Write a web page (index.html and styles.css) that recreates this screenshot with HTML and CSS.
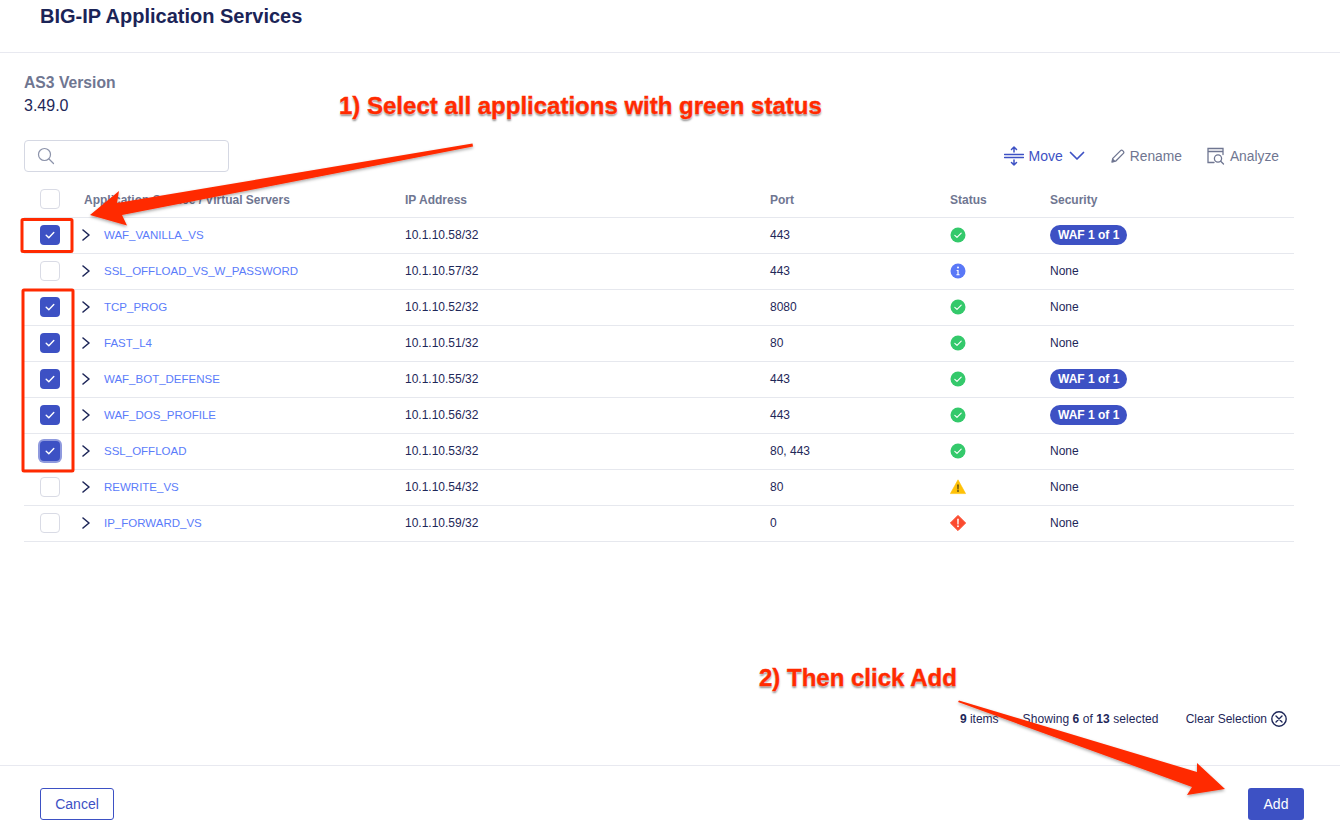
FILE: index.html
```html
<!DOCTYPE html>
<html lang="en">
<head>
<meta charset="utf-8">
<title>BIG-IP Application Services</title>
<link rel="stylesheet" href="styles.css">
</head>
<body>
<svg width="0" height="0" class="defs">
  <defs>
    <symbol id="tick" viewBox="0 0 20 20"><path d="M6.2 10.3l2.6 2.5 5-5.2" fill="none" stroke="#fff" stroke-width="1.4" stroke-linecap="round" stroke-linejoin="round"/></symbol>
    <symbol id="chev" viewBox="0 0 10 14"><path d="M2 2l6 5-6 5" fill="none" stroke="#1e2759" stroke-width="1.6" stroke-linecap="round" stroke-linejoin="round"/></symbol>
    <symbol id="ok" viewBox="0 0 16 16"><circle cx="8" cy="8" r="7.5" fill="#34c96b"/><path d="M4.8 8.3l2.2 2.1 4.2-4.2" fill="none" stroke="#fff" stroke-width="1.1" stroke-linecap="round" stroke-linejoin="round"/></symbol>
    <symbol id="info" viewBox="0 0 16 16"><circle cx="8" cy="8" r="7.5" fill="#5a78f7"/><circle cx="8" cy="4.6" r="1" fill="#fff"/><path d="M6.6 7h2v4.2h1v1H6.4v-1h1V8h-.8z" fill="#fff"/></symbol>
    <symbol id="warn" viewBox="0 0 16 16"><path d="M8 .8L15.6 14.6H.4z" fill="#ffc107" stroke="#ffc107" stroke-width=".6" stroke-linejoin="round"/><path d="M7.2 5.400h1.600l-.2 5H7.400z" fill="#5a4a10"/><circle cx="8" cy="12" r=".9" fill="#5a4a10"/></symbol>
    <symbol id="crit" viewBox="0 0 16 16"><path d="M8 .4L15.6 8 8 15.6.4 8z" fill="#fb4a2e" stroke="#fb4a2e" stroke-linejoin="round"/><path d="M7.2 3.800h1.600l-.2 5.600H7.400z" fill="#fff"/><circle cx="8" cy="11.2" r=".95" fill="#fff"/></symbol>
  </defs>
</svg>

<div class="page">
  <header class="head"><h1 class="title">BIG-IP Application Services</h1></header>

  <main class="content">
    <div class="version">
      <div class="version-label">AS3 Version</div>
      <div class="version-value">3.49.0</div>
    </div>

    <div class="toolbar">
      <div class="search">
        <svg class="search-icon" width="18" height="18" viewBox="0 0 18 18"><circle cx="7.5" cy="7.5" r="6" fill="none" stroke="#8c93aa" stroke-width="1.2"/><path d="M12 12l4.500 4.500" stroke="#8c93aa" stroke-width="1.2" stroke-linecap="round"/></svg>
      </div>
      <div class="actions">
        <span class="action primary">
          <svg width="20" height="20" viewBox="0 0 20 20" fill="none" stroke="#3d51c4" stroke-width="1.5" stroke-linecap="round" stroke-linejoin="round"><path d="M0.500 8.500h19M0.500 11.500h19M10 1v5M10 14v5M7.500 3.500L10 1l2.500 2.500M7.500 16.500L10 19l2.500-2.500"/></svg>
          <span>Move</span>
          <svg class="caret" width="16" height="10" viewBox="0 0 16 10"><path d="M1.500 1.500L8 8l6.500-6.500" fill="none" stroke="#3d51c4" stroke-width="1.7" stroke-linecap="round" stroke-linejoin="round"/></svg>
        </span>
        <span class="action muted pencil">
          <svg width="14" height="14" viewBox="0 0 14 14"><path d="M1 13l.8-3.600L9.600 1.600a1.400 1.400 0 0 1 2 0l.8.8a1.400 1.400 0 0 1 0 2L4.600 12.200z" fill="none" stroke="#6f7691" stroke-width="1.300" stroke-linejoin="round"/><path d="M1 13l.8-3.600 2.800 2.800z" fill="#6f7691"/></svg>
          <span>Rename</span>
        </span>
        <span class="action muted">
          <svg width="18" height="18" viewBox="0 0 18 18" fill="none" stroke="#6f7691" stroke-width="1.300" stroke-linecap="round"><path d="M7 15.500H1V1.500h15v6M1 4.500h15"/><circle cx="11" cy="11.500" r="3.600"/><path d="M13.700 14.200l2.800 2.800"/></svg>
          <span>Analyze</span>
        </span>
      </div>
    </div>

    <table class="apps">
      <colgroup><col class="c-check"><col class="c-name"><col class="c-ip"><col class="c-port"><col class="c-status"><col class="c-sec"></colgroup>
      <thead>
        <tr>
          <th><span class="box"></span></th>
          <th class="name-head">Application Service / Virtual Servers</th>
          <th>IP Address</th><th>Port</th><th>Status</th><th>Security</th>
        </tr>
      </thead>
      <tbody>
        <tr><td><span class="box on"><svg width="20" height="20"><use href="#tick"/></svg></span></td><td><svg class="chev" width="10" height="14"><use href="#chev"/></svg><a class="link">WAF_VANILLA_VS</a></td><td>10.1.10.58/32</td><td>443</td><td><svg class="st" width="16" height="16"><use href="#ok"/></svg></td><td><span class="pill">WAF 1 of 1</span></td></tr>
        <tr><td><span class="box"></span></td><td><svg class="chev" width="10" height="14"><use href="#chev"/></svg><a class="link">SSL_OFFLOAD_VS_W_PASSWORD</a></td><td>10.1.10.57/32</td><td>443</td><td><svg class="st" width="16" height="16"><use href="#info"/></svg></td><td>None</td></tr>
        <tr><td><span class="box on"><svg width="20" height="20"><use href="#tick"/></svg></span></td><td><svg class="chev" width="10" height="14"><use href="#chev"/></svg><a class="link">TCP_PROG</a></td><td>10.1.10.52/32</td><td>8080</td><td><svg class="st" width="16" height="16"><use href="#ok"/></svg></td><td>None</td></tr>
        <tr><td><span class="box on"><svg width="20" height="20"><use href="#tick"/></svg></span></td><td><svg class="chev" width="10" height="14"><use href="#chev"/></svg><a class="link">FAST_L4</a></td><td>10.1.10.51/32</td><td>80</td><td><svg class="st" width="16" height="16"><use href="#ok"/></svg></td><td>None</td></tr>
        <tr><td><span class="box on"><svg width="20" height="20"><use href="#tick"/></svg></span></td><td><svg class="chev" width="10" height="14"><use href="#chev"/></svg><a class="link">WAF_BOT_DEFENSE</a></td><td>10.1.10.55/32</td><td>443</td><td><svg class="st" width="16" height="16"><use href="#ok"/></svg></td><td><span class="pill">WAF 1 of 1</span></td></tr>
        <tr><td><span class="box on"><svg width="20" height="20"><use href="#tick"/></svg></span></td><td><svg class="chev" width="10" height="14"><use href="#chev"/></svg><a class="link">WAF_DOS_PROFILE</a></td><td>10.1.10.56/32</td><td>443</td><td><svg class="st" width="16" height="16"><use href="#ok"/></svg></td><td><span class="pill">WAF 1 of 1</span></td></tr>
        <tr><td><span class="box on focus"><svg width="20" height="20"><use href="#tick"/></svg></span></td><td><svg class="chev" width="10" height="14"><use href="#chev"/></svg><a class="link">SSL_OFFLOAD</a></td><td>10.1.10.53/32</td><td>80, 443</td><td><svg class="st" width="16" height="16"><use href="#ok"/></svg></td><td>None</td></tr>
        <tr><td><span class="box"></span></td><td><svg class="chev" width="10" height="14"><use href="#chev"/></svg><a class="link">REWRITE_VS</a></td><td>10.1.10.54/32</td><td>80</td><td><svg class="st" width="16" height="16"><use href="#warn"/></svg></td><td>None</td></tr>
        <tr><td><span class="box"></span></td><td><svg class="chev" width="10" height="14"><use href="#chev"/></svg><a class="link">IP_FORWARD_VS</a></td><td>10.1.10.59/32</td><td>0</td><td><svg class="st" width="16" height="16"><use href="#crit"/></svg></td><td>None</td></tr>
      </tbody>
    </table>

    <div class="summary">
      <span class="items"><b>9</b> items</span>
      <span class="showing">Showing <b>6</b> of <b>13</b> selected</span>
      <span class="clear">Clear Selection
        <svg width="16" height="16" viewBox="0 0 16 16" fill="none" stroke="#1e2759" stroke-width="1.400" stroke-linecap="round"><circle cx="8" cy="8" r="7.200"/><path d="M5 5l6 6M11 5l-6 6"/></svg>
      </span>
    </div>
  </main>

  <footer class="foot">
    <button class="btn ghost">Cancel</button>
    <button class="btn solid">Add</button>
  </footer>
</div>

<svg class="overlay" width="1340" height="829" viewBox="0 0 1340 829">
  <defs><filter id="sh" x="-10%" y="-30%" width="120%" height="160%"><feDropShadow dx="0" dy="1.500" stdDeviation="1.500" flood-color="#000" flood-opacity=".35"/></filter></defs>
  <g fill="#ff2a00" filter="url(#sh)">
    <path d="M472.500 143.500l.5 3L122 215l5 10.500L90 215l29-24-2 12z"/>
    <path d="M958 702l1-1.500L1197 772l0-9 28 26-38 6 5-8z"/>
  </g>
  <rect class="redbox" x="22" y="219.500" width="50" height="32" rx="1"/>
  <rect class="redbox" x="23" y="290" width="50" height="181" rx="1"/>
</svg>
<div class="note note-one">1) Select all applications with green status</div>
<div class="note note-two">2) Then click Add</div>
</body>
</html>
```
FILE: styles.css
```css
* { box-sizing: border-box; }
html, body { margin: 0; height: 100%; }
body {
  position: relative;
  width: 1340px;
  height: 829px;
  overflow: hidden;
  background: #fff;
  color: #1e2759;
  font-family: "Liberation Sans", Arial, sans-serif;
  font-size: 12px;
}
.defs { position: absolute; }
.page { display: flex; flex-direction: column; height: 829px; }

.head { height: 53px; padding: 4px 40px 0; border-bottom: 1px solid #e8e9f0; }
.title { margin: 0; font-size: 20px; line-height: 24px; font-weight: 700; color: #1b2457; }

.content { flex: 1; display: flex; flex-direction: column; padding: 20px 46px 0 24px; min-height: 0; }
.version-label { font-size: 15.700px; line-height: 20px; font-weight: 700; color: #6f7691; }
.version-value { margin-top: 3px; font-size: 16px; line-height: 20px; color: #1e2759; }

.toolbar { display: flex; justify-content: space-between; align-items: center; margin-top: 24px; height: 32px; padding-right: 15px; }
.search { width: 205px; height: 32px; border: 1px solid #d5d8e3; border-radius: 4px; display: flex; align-items: center; padding-left: 12px; }
.actions { display: flex; align-items: center; gap: 25px; font-size: 13.800px; }
.action { display: inline-flex; align-items: center; gap: 5px; }
.action.primary { color: #3d51c4; font-size: 14px; margin-right: 1px; }
.action.muted { color: #6f7691; }
.caret { margin-left: 1px; }

.apps { width: 1270px; margin-top: 9px; border-collapse: collapse; table-layout: fixed; }
.c-check { width: 60px; } .c-name { width: 321px; } .c-ip { width: 365px; }
.c-port { width: 180px; } .c-status { width: 100px; } .c-sec { width: 244px; }
.apps th { height: 36px; padding: 2px 0 0; text-align: left; font-size: 12px; font-weight: 700; color: #6f7691; border-bottom: 1px solid #e6e8ee; }
.apps td { height: 36px; padding: 0 0 1px; border-bottom: 1px solid #e6e8ee; vertical-align: middle; }
.apps th:first-child, .apps td:first-child { padding: 0 0 0 16px; }
.apps td:nth-child(5), .apps td:has(.pill) { padding-bottom: 0; }
.box { display: block; width: 20px; height: 20px; border: 1px solid #d9dbe5; border-radius: 4px; background: #fff; }
.box.on { border: 0; background: #3d51c4; }
.box.focus { box-shadow: 0 0 0 2px #8f9ade; }
.box svg { display: block; }
.chev { vertical-align: middle; margin: 1px 13px 0 -3px; }
.link { color: #5b7cfa; font-size: 11.500px; vertical-align: middle; }
.st { display: block; }
.pill { display: inline-block; height: 20px; line-height: 20px; padding: 0 8px; border-radius: 10px; background: #3d51c4; color: #fff; font-weight: 700; }

.summary { margin-top: auto; margin-bottom: 38px; display: flex; justify-content: flex-end; align-items: center; padding-right: 7px; }
.showing { margin-left: 24px; letter-spacing: .08px; }
.clear { margin-left: 27px; display: inline-flex; align-items: center; gap: 4px; }

.foot { height: 64px; border-top: 1px solid #e8e9f0; display: flex; justify-content: space-between; align-items: flex-start; padding: 22px 36px 0 40px; }
.btn { height: 32px; border-radius: 3px; font-family: inherit; font-size: 14px; padding: 0; }
.ghost { width: 74px; background: #fff; border: 1px solid #3d51c4; color: #3d51c4; }
.solid { width: 56px; background: #3d51c4; border: 0; color: #fff; }

.overlay { position: absolute; left: 0; top: 0; pointer-events: none; }
.redbox { fill: none; stroke: #ff2a00; stroke-width: 3; }
.note {
  position: absolute;
  font-weight: 700;
  font-size: 24px;
  line-height: 28px;
  color: #ff2a00;
  white-space: nowrap;
  -webkit-text-stroke: .4px #ff2a00;
  text-shadow: 0 0 1px #fff, 0 0 2px #fff, 0 2px 2px rgba(0,0,0,.45);
}
.note-one { left: 339px; top: 92px; }
.note-two { left: 759px; top: 664px; }
```
